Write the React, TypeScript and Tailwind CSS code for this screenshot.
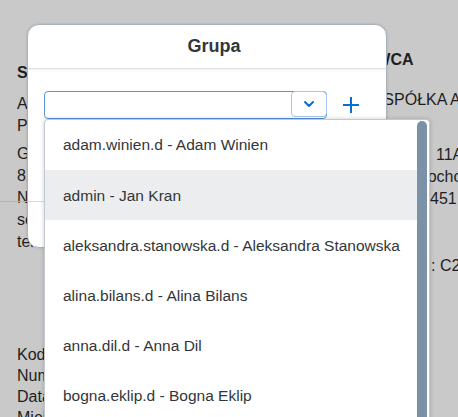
import React from "react";

const users = [
  "adam.winien.d - Adam Winien",
  "admin - Jan Kran",
  "aleksandra.stanowska.d - Aleksandra Stanowska",
  "alina.bilans.d - Alina Bilans",
  "anna.dil.d - Anna Dil",
  "bogna.eklip.d - Bogna Eklip",
];

export default function App() {
  return (
    <div
      className="relative w-[458px] h-[417px] overflow-hidden bg-[#c9c9c9] text-[#1e1e1e]"
      style={{ fontFamily: '"Liberation Sans", Arial, sans-serif' }}
    >
      {/* background page (dimmed) */}
      <div className="flex text-[16px] leading-[22px] whitespace-nowrap">
        <div className="w-[330px] shrink-0 pl-[17px] pt-[62px]">
          <div className="font-bold">SPRZEDAWCA</div>
          <div className="mt-[9px]">Alfa Beta</div>
          <div>Przedsiębiorstwo</div>
          <div className="mt-[6px]">Główna 11A</div>
          <div>82-300 Elbląg</div>
          <div>NIP 578-000-00-00</div>
          <div>sekretariat@alfa.pl</div>
          <div>tel. 55 000 00 00</div>
          <div className="mt-[91px] leading-[21px]">
            <div>Kod</div>
            <div>Numer</div>
            <div>Data</div>
            <div>Miejsce</div>
          </div>
        </div>
        <div className="pt-[49px]">
          <div className="font-bold">NABYWCA</div>
          <div className="mt-[18px]">FIRMA SPÓŁKA AKCYJNA</div>
          <div className="mt-[33px] pl-[106px]">11A</div>
          <div className="pl-[87px]">Pochodnia</div>
          <div className="pl-[100px]">451</div>
          <div className="mt-[45px] pl-[101px]">: C2</div>
        </div>
      </div>
      <div className="absolute left-0 top-[201px] w-[44px] h-px bg-[#b3b3b3]" />

      {/* dialog */}
      <div className="absolute left-[27px] top-[24px] w-[360px] h-[224px] bg-white rounded-[12px] border border-[#aab3bc] shadow-[0_0_3px_rgba(0,0,0,0.15)] flex flex-col overflow-hidden">
        <div className="h-[44px] shrink-0 flex items-center justify-center pl-[14px] border-b border-[#e0e0e0] shadow-[0_1px_2px_rgba(0,0,0,0.06)]">
          <span className="font-bold text-[18px] text-[#32363a]">Grupa</span>
        </div>
        <div className="flex-1">
          <div className="flex items-center pl-[16px] pt-[22px]">
            <div className="flex w-[283px] h-[28px] border border-[#5a93e0] rounded-[4px]">
              <div className="flex-1" />
              <div className="w-[36px] h-full border border-[#a8c6ef] rounded-[4px] -m-px flex items-center justify-center">
                <svg width="12" height="8" viewBox="0 0 12 8">
                  <path d="M2 2 L6 6 L10 2" stroke="#0a6ed1" strokeWidth="2" fill="none" strokeLinecap="round" strokeLinejoin="round" />
                </svg>
              </div>
            </div>
            <div className="ml-[15px]">
              <svg width="18" height="18" viewBox="0 0 18 18">
                <path d="M9 1 V17 M1 9 H17" stroke="#0a6ed1" strokeWidth="2" />
              </svg>
            </div>
          </div>
        </div>
        <div className="h-[46px] shrink-0 border-t border-[#d9d9d9]" />
      </div>

      {/* dropdown list */}
      <div className="absolute left-[44px] top-[119px] w-[386px] h-[310px] bg-white rounded-[4px] border border-[#c3c9cf] shadow-[0_0_4px_rgba(0,0,0,0.2)] flex">
        <div className="flex-1 flex flex-col">
          {users.map((u, i) => (
            <div
              key={u}
              className={`h-[50.2px] shrink-0 flex items-center pl-[18px] text-[15.5px] text-[#32363a] ${i === 1 ? "bg-[#ebedef]" : ""}`}
            >
              {u}
            </div>
          ))}
        </div>
        <div className="w-[12px] pt-[1px] pr-[1px]">
          <div className="w-[10px] h-full bg-[#7b91a8] rounded-t-[5px]" />
        </div>
      </div>
    </div>
  );
}
